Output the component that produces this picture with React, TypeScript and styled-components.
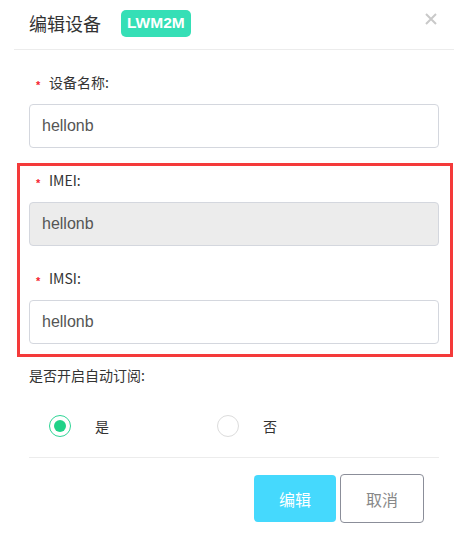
import React from "react";
import styled, { createGlobalStyle } from "styled-components";

const Global = createGlobalStyle`
  html, body { margin: 0; padding: 0; background: #fff; }
  body { font-family: "Noto Sans CJK SC", "Microsoft YaHei", sans-serif; color: #333; }
  * { box-sizing: border-box; }
`;

const Modal = styled.div`
  width: 470px;
  height: 533px;
  background: #fff;
  display: flex;
  flex-direction: column;
`;

const Header = styled.div`
  height: 50px;
  margin: 0 16px 0 14px;
  padding: 0 15px;
  border-bottom: 1px solid #ececec;
  display: flex;
  align-items: center;
`;

const Title = styled.div`
  font-size: 18px;
  line-height: 24px;
  color: #333;
  margin-top: -4px;
`;

const Badge = styled.span`
  margin-left: 20px;
  margin-top: -3px;
  height: 27px;
  padding: 0 6px;
  border-radius: 5px;
  background: #35dfb6;
  color: #fff;
  font-family: "Liberation Sans", Arial, sans-serif;
  font-weight: bold;
  font-size: 15.5px;
  display: flex;
  align-items: center;
`;

const Close = styled.button`
  margin-left: auto;
  margin-top: -11px;
  margin-right: 2px;
  border: 0;
  padding: 0;
  background: none;
  width: 12px;
  height: 12px;
  display: flex;
`;

const Body = styled.div`
  padding: 22px 0 0 29px;
  width: 439px;
  display: flex;
  flex-direction: column;
`;

const Label = styled.div`
  height: 20px;
  line-height: 20px;
  font-size: 14px;
  color: #333;
  display: flex;
  align-items: center;
  margin-bottom: 12px;
`;

const Star = styled.span`
  width: 20px;
  padding-left: 7px;
  display: flex;
  align-items: center;
  &::before {
    content: "*";
    color: #f5222d;
    font-family: "Liberation Sans", Arial, sans-serif;
    font-size: 11px;
    line-height: 11px;
    transform: translateY(3px);
    font-weight: bold;
  }
`;

const Input = styled.input<{ $disabled?: boolean }>`
  width: 410px;
  height: 44px;
  border: 1px solid #d4d7de;
  border-radius: 4px;
  padding: 0 12px;
  font-family: "Liberation Sans", Arial, sans-serif;
  font-size: 16px;
  color: #555;
  background: ${(p) => (p.$disabled ? "#ececec" : "#fff")};
  outline: none;
`;

const Highlight = styled.div`
  margin: 15px -14px 0 -12px;
  border: 3px solid #f43a3a;
  padding: 4px 11px 10px 9px;
  display: flex;
  flex-direction: column;
`;

const Gap = styled.div`
  height: 22px;
`;

const PlainLabel = styled(Label)`
  margin: 8px 0 0 0;
`;

const RadioGroup = styled.div`
  display: flex;
  margin-top: 30px;
  padding-left: 20px;
  height: 22px;
`;

const Option = styled.label`
  width: 168px;
  display: flex;
  align-items: center;
  gap: 24px;
  font-size: 14px;
  color: #333;
`;

const Circle = styled.span<{ $on?: boolean }>`
  width: 22px;
  height: 22px;
  border-radius: 50%;
  border: 1px solid ${(p) => (p.$on ? "#2fd596" : "#dcdcdc")};
  display: flex;
  align-items: center;
  justify-content: center;
  &::after {
    content: "";
    width: 12px;
    height: 12px;
    border-radius: 50%;
    background: ${(p) => (p.$on ? "#20d288" : "transparent")};
  }
`;

const Footer = styled.div`
  margin-top: 20px;
  border-top: 1px solid #ececec;
  width: 410px;
  padding: 16px 15px 0 0;
  display: flex;
  justify-content: flex-end;
  gap: 4px;
`;

const Button = styled.button<{ $primary?: boolean }>`
  width: ${(p) => (p.$primary ? "82px" : "84px")};
  height: ${(p) => (p.$primary ? "47px" : "49px")};
  margin-top: ${(p) => (p.$primary ? "1px" : "0")};
  border-radius: 4px;
  font-family: "Noto Sans CJK SC", sans-serif;
  font-size: 16px;
  border: ${(p) => (p.$primary ? "0" : "1px solid #8b8e99")};
  background: ${(p) => (p.$primary ? "#45d9fd" : "#fff")};
  color: ${(p) => (p.$primary ? "#fff" : "#888")};
`;

export default function App() {
  return (
    <Modal>
      <Global />
      <Header>
        <Title>编辑设备</Title>
        <Badge>LWM2M</Badge>
        <Close aria-label="close">
          <svg width="12" height="12" viewBox="0 0 12 12">
            <path d="M1 1 L11 11 M11 1 L1 11" stroke="#c9c9c9" strokeWidth="2" />
          </svg>
        </Close>
      </Header>
      <Body>
        <Label>
          <Star />设备名称:
        </Label>
        <Input defaultValue="hellonb" />
        <Highlight>
          <Label>
            <Star />IMEI:
          </Label>
          <Input $disabled readOnly defaultValue="hellonb" />
          <Gap />
          <Label>
            <Star />IMSI:
          </Label>
          <Input defaultValue="hellonb" />
        </Highlight>
        <PlainLabel>是否开启自动订阅:</PlainLabel>
        <RadioGroup>
          <Option>
            <Circle $on />是
          </Option>
          <Option>
            <Circle />否
          </Option>
        </RadioGroup>
        <Footer>
          <Button $primary>编辑</Button>
          <Button>取消</Button>
        </Footer>
      </Body>
    </Modal>
  );
}
